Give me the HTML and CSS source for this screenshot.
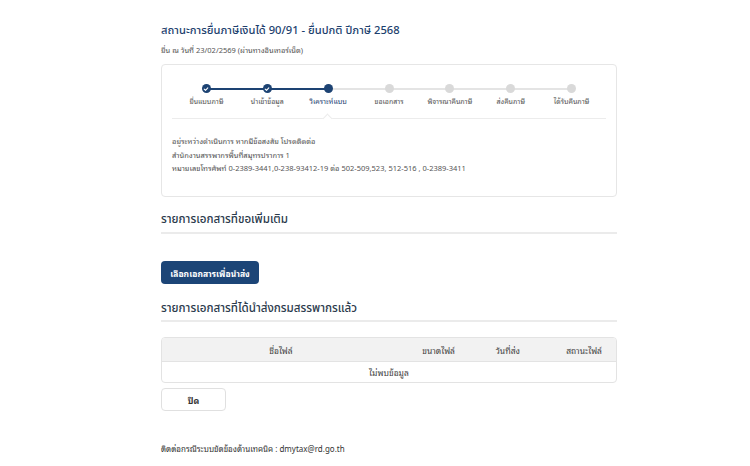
FILE: index.html
```html
<!DOCTYPE html>
<html lang="th">
<head>
<meta charset="utf-8">
<link rel="stylesheet" href="styles.css">
</head>
<body>
<div class="page">
  <h1 class="title">สถานะการยื่นภาษีเงินได้ 90/91 - ยื่นปกติ ปีภาษี 2568</h1>
  <div class="subtitle">ยื่น ณ วันที่ 23/02/2569 (ผ่านทางอินเทอร์เน็ต)</div>

  <div class="card">
    <div class="steps">
      <div class="step done"><span class="dot"><svg viewBox="0 0 10 10" width="6" height="6"><path d="M2 5.2 L4.2 7.2 L8 3" fill="none" stroke="#fff" stroke-width="1.8" stroke-linecap="round" stroke-linejoin="round"/></svg></span><span class="label">ยื่นแบบภาษี</span></div>
      <div class="step done"><span class="dot"><svg viewBox="0 0 10 10" width="6" height="6"><path d="M2 5.2 L4.2 7.2 L8 3" fill="none" stroke="#fff" stroke-width="1.8" stroke-linecap="round" stroke-linejoin="round"/></svg></span><span class="label">นำเข้าข้อมูล</span></div>
      <div class="step active"><span class="dot"></span><span class="label">วิเคราะห์แบบ</span></div>
      <div class="step"><span class="dot"></span><span class="label">ขอเอกสาร</span></div>
      <div class="step"><span class="dot"></span><span class="label">พิจารณาคืนภาษี</span></div>
      <div class="step"><span class="dot"></span><span class="label">ส่งคืนภาษี</span></div>
      <div class="step"><span class="dot"></span><span class="label">ได้รับคืนภาษี</span></div>
    </div>
    <div class="divider"><span class="notch"></span></div>
    <div class="info">
      <p>อยู่ระหว่างดำเนินการ หากมีข้อสงสัย โปรดติดต่อ</p>
      <p>สำนักงานสรรพากรพื้นที่สมุทรปราการ 1</p>
      <p>หมายเลขโทรศัพท์ 0-2389-3441,0-238-93412-19 ต่อ 502-509,523, 512-516 , 0-2389-3411</p>
    </div>
  </div>

  <h2 class="section">รายการเอกสารที่ขอเพิ่มเติม</h2>
  <button class="btn-primary">เลือกเอกสารเพื่อนำส่ง</button>

  <h2 class="section second">รายการเอกสารที่ได้นำส่งกรมสรรพากรแล้ว</h2>
  <div class="table">
    <div class="thead">
      <span class="c-name">ชื่อไฟล์</span>
      <span class="c-size">ขนาดไฟล์</span>
      <span class="c-date">วันที่ส่ง</span>
      <span class="c-status">สถานะไฟล์</span>
    </div>
    <div class="empty">ไม่พบข้อมูล</div>
  </div>
  <button class="btn-close">ปิด</button>

  <div class="footer">ติดต่อกรณีระบบขัดข้องด้านเทคนิค : dmytax@rd.go.th</div>
</div>
</body>
</html>
```

FILE: styles.css
```css
* { box-sizing: border-box; }
body {
  margin: 0;
  background: #fff;
  font-family: "Noto Sans Thai Looped", "Noto Sans Thai", "Noto Sans", "Liberation Sans", sans-serif;
  color: #333;
}
.page {
  width: 456px;
  margin-left: 161px;
  padding-top: 21px;
}
.title {
  margin: 0;
  font-family: "Noto Sans Thai", "Noto Sans", sans-serif;
  font-size: 11.2px;
  font-weight: 500;
  color: #1d3f6e;
  line-height: 20px;
}
.subtitle {
  margin-top: 3px;
  font-size: 7.5px;
  color: #555;
  line-height: 12px;
}
.card {
  margin-top: 8px;
  border: 1px solid #e6e6e6;
  border-radius: 4px;
  height: 133px;
  padding: 0 10px;
}
.steps {
  display: flex;
  padding: 19px 4px 0 4px;
}
.step {
  flex: 1;
  display: flex;
  flex-direction: column;
  align-items: center;
  position: relative;
}
.step::before {
  content: "";
  position: absolute;
  top: 3.5px;
  left: -50%;
  width: 100%;
  height: 2px;
  background: #e4e4e4;
  z-index: 0;
}
.step:first-child::before { display: none; }
.step.done::before, .step.active::before { background: #1d4373; }
.dot {
  position: relative;
  z-index: 1;
  width: 9px;
  height: 9px;
  border-radius: 50%;
  background: #d9d9d9;
  display: flex;
  align-items: center;
  justify-content: center;
}
.step.done .dot, .step.active .dot { background: #1d4373; }
.label {
  margin-top: 3px;
  font-size: 7px;
  color: #555;
  line-height: 10px;
  white-space: nowrap;
}
.step.active .label { color: #1d4373; }
.divider {
  margin-top: 12px;
  border-top: 1px solid #ececec;
  position: relative;
  height: 0;
}
.notch {
  position: absolute;
  top: -4px;
  left: 152px;
  width: 7px;
  height: 7px;
  background: #fff;
  border-left: 1px solid #ececec;
  border-top: 1px solid #ececec;
  transform: rotate(45deg);
}
.info {
  padding-top: 16px;
}
.info p {
  margin: 0;
  font-size: 7.5px;
  line-height: 13.5px;
  color: #555;
}
.section {
  margin: 0;
  margin-top: 14px;
  font-family: "Noto Sans Thai", "Noto Sans", sans-serif;
  font-size: 11.6px;
  font-weight: 500;
  color: #2b3a4c;
  line-height: 18px;
  padding-bottom: 3px;
  border-bottom: 2px solid #ebebeb;
}
.section.second { margin-top: 16px; padding-bottom: 2px; }
.btn-primary {
  display: block;
  margin-top: 27px;
  height: 23px;
  width: 98px;
  border: none;
  border-radius: 4px;
  background: #1c4577;
  color: #fff;
  font-family: inherit;
  font-size: 8.5px;
  font-weight: 700;
  padding: 0;
}
.table {
  margin-top: 15px;
  border: 1px solid #e3e3e3;
  border-radius: 4px;
  overflow: hidden;
}
.thead {
  display: grid;
  grid-template-columns: 238px 61px 65px 1fr;
  height: 24px;
  align-items: center;
  background: #f2f2f2;
  border-bottom: 1px solid #e3e3e3;
  font-size: 8.5px;
  color: #444;
  white-space: nowrap;
}
.c-name { text-align: center; }
.c-size { text-align: right; padding-right: 6px; }
.c-date { text-align: right; padding-right: 6px; }
.c-status { text-align: right; padding-right: 14px; }
.empty {
  height: 20px;
  line-height: 20px;
  text-align: center;
  font-size: 8.5px;
  color: #444;
}
.btn-close {
  display: block;
  margin-top: 5px;
  width: 65px;
  height: 23px;
  background: #fff;
  border: 1px solid #e0e0e0;
  border-radius: 4px;
  font-family: inherit;
  font-size: 8.5px;
  font-weight: 700;
  color: #333;
  padding: 0;
}
.footer {
  margin-top: 32px;
  font-size: 8px;
  color: #333;
  line-height: 12px;
}
```
